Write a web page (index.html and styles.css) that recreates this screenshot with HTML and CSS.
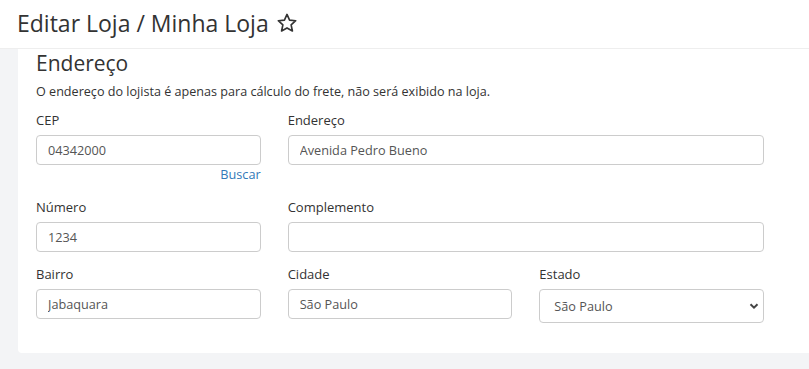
FILE: index.html
```html
<!DOCTYPE html>
<html lang="pt-BR">
<head>
    <meta charset="UTF-8">
    <meta name="viewport" content="width=device-width, initial-scale=1.0">
    <title>Editar Loja</title>
    <link rel="stylesheet" href="styles.css">
</head>
<body>
    <div class="page-header">
        <h1>Editar Loja / Minha Loja</h1>
        <svg class="star" width="22" height="22" viewBox="0 0 24 24">
            <path d="M12 2.6l2.8 6.2 6.7.7-5 4.5 1.4 6.7L12 17.4l-5.9 3.3 1.4-6.7-5-4.5 6.7-.7z" fill="none" stroke="#333" stroke-width="1.8" stroke-linejoin="round"/>
        </svg>
    </div>

    <div class="content">
        <div class="card">
            <h2>Endereço</h2>
            <p class="hint">O endereço do lojista é apenas para cálculo do frete, não será exibido na loja.</p>

            <div class="form-grid">
                <div class="form-group">
                    <label for="cep">CEP</label>
                    <input type="text" id="cep" value="04342000">
                    <a href="#" class="search-link">Buscar</a>
                </div>
                <div class="form-group span-2">
                    <label for="endereco">Endereço</label>
                    <input type="text" id="endereco" value="Avenida Pedro Bueno">
                </div>

                <div class="form-group">
                    <label for="numero">Número</label>
                    <input type="text" id="numero" value="1234">
                </div>
                <div class="form-group span-2">
                    <label for="complemento">Complemento</label>
                    <input type="text" id="complemento" value="">
                </div>

                <div class="form-group">
                    <label for="bairro">Bairro</label>
                    <input type="text" id="bairro" value="Jabaquara">
                </div>
                <div class="form-group">
                    <label for="cidade">Cidade</label>
                    <input type="text" id="cidade" value="São Paulo">
                </div>
                <div class="form-group">
                    <label for="estado">Estado</label>
                    <div class="select-wrap">
                        <select id="estado">
                            <option>São Paulo</option>
                            <option>Rio de Janeiro</option>
                            <option>Minas Gerais</option>
                        </select>
                        <svg class="chevron" width="10" height="8" viewBox="0 0 10 8">
                            <path d="M1.5 2.2L5 5.6l3.5-3.4" fill="none" stroke="#444" stroke-width="2"/>
                        </svg>
                    </div>
                </div>
            </div>
        </div>
    </div>
</body>
</html>
```

FILE: styles.css
```css
body {
    font-family: 'Open Sans', 'Liberation Sans', sans-serif;
    color: #333;
    margin: 0;
    padding: 0;
    background-color: #f3f4f6;
    height: 369px;
    overflow: hidden;
}
.page-header {
    background-color: #fff;
    height: 48px;
    border-bottom: 1px solid #eeeeee;
    display: flex;
    align-items: center;
    padding-left: 17px;
}
.page-header h1 {
    margin: 0;
    font-size: 23px;
    font-weight: 400;
    color: #333;
    line-height: 1;
    padding-bottom: 2px;
}
.star {
    margin-left: 7px;
    margin-bottom: 3px;
}
.content {
    padding-left: 18px;
}
.card {
    background-color: #fff;
    border-radius: 0 0 0 4px;
    padding: 0 18px 30px 18px;
}
h2 {
    margin: 0;
    padding-top: 2px;
    font-size: 21px;
    font-weight: 400;
    line-height: 24px;
    color: #333;
}
.hint {
    margin: 8px 0 10px;
    font-size: 12.6px;
    line-height: 18px;
}
.form-grid {
    width: 728px;
    display: grid;
    grid-template-columns: repeat(3, 1fr);
    column-gap: 27px;
    row-gap: 13px;
}
.span-2 {
    grid-column: span 2;
}
.form-group {
    display: flex;
    flex-direction: column;
}
label {
    font-size: 13px;
    line-height: 18px;
    margin-bottom: 6px;
}
input[type="text"],
select {
    width: 100%;
    height: 30px;
    padding: 0 11px;
    border: 1px solid #ccc;
    border-radius: 4px;
    font-family: inherit;
    font-size: 12.7px;
    color: #555;
    box-sizing: border-box;
    background-color: #fff;
    outline: none;
}
.search-link {
    align-self: flex-end;
    font-size: 12.7px;
    line-height: 18px;
    margin-bottom: 2px;
    color: #3279b8;
    text-decoration: none;
}
.select-wrap {
    position: relative;
}
select {
    height: 34px;
    padding: 0 14px;
    appearance: none;
    -webkit-appearance: none;
}
.chevron {
    position: absolute;
    right: 5px;
    top: 13px;
    pointer-events: none;
}
```
